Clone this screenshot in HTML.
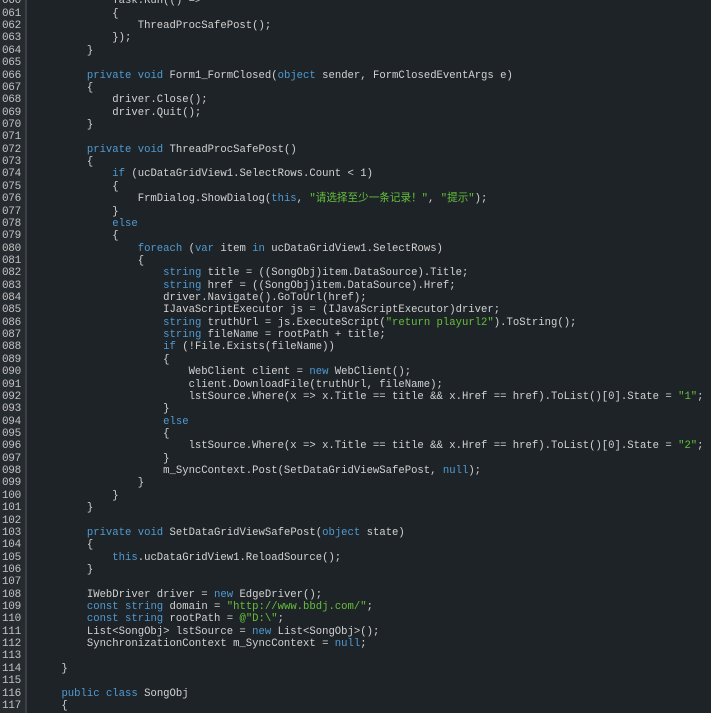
<!DOCTYPE html>
<html><head><meta charset="utf-8"><style>
html,body{margin:0;padding:0;width:711px;height:713px;overflow:hidden;background:#1e2327;}
.g{position:absolute;left:0;top:0;width:25px;height:713px;background:#262b2f;border-right:2px solid #3a4045;}
pre{margin:0;position:absolute;top:-4.6px;font-family:"Liberation Mono","Noto Sans CJK SC",monospace;font-size:10.6px;line-height:12.36px;white-space:pre;}
.n{left:2px;color:#c4c4c4;font-size:11px;letter-spacing:-0.3px;}
.c{left:36px;color:#d2d2d2;}
.k{color:#4f9bd3}.s{color:#64c03c}
</style></head><body>
<div class="g"></div>
<pre class="n">060
061
062
063
064
065
066
067
068
069
070
071
072
073
074
075
076
077
078
079
080
081
082
083
084
085
086
087
088
089
090
091
092
093
094
095
096
097
098
099
100
101
102
103
104
105
106
107
108
109
110
111
112
113
114
115
116
117</pre>
<pre class="c">            Task.Run(() =>
            {
                ThreadProcSafePost();
            });
        }

        <span class="k">private</span> <span class="k">void</span> Form1_FormClosed(<span class="k">object</span> sender, FormClosedEventArgs e)
        {
            driver.Close();
            driver.Quit();
        }

        <span class="k">private</span> <span class="k">void</span> ThreadProcSafePost()
        {
            <span class="k">if</span> (ucDataGridView1.SelectRows.Count &lt; 1)
            {
                FrmDialog.ShowDialog(<span class="k">this</span>, <span class="s">"请选择至少一条记录！"</span>, <span class="s">"提示"</span>);
            }
            <span class="k">else</span>
            {
                <span class="k">foreach</span> (<span class="k">var</span> item <span class="k">in</span> ucDataGridView1.SelectRows)
                {
                    <span class="k">string</span> title = ((SongObj)item.DataSource).Title;
                    <span class="k">string</span> href = ((SongObj)item.DataSource).Href;
                    driver.Navigate().GoToUrl(href);
                    IJavaScriptExecutor js = (IJavaScriptExecutor)driver;
                    <span class="k">string</span> truthUrl = js.ExecuteScript(<span class="s">"return playurl2"</span>).ToString();
                    <span class="k">string</span> fileName = rootPath + title;
                    <span class="k">if</span> (!File.Exists(fileName))
                    {
                        WebClient client = <span class="k">new</span> WebClient();
                        client.DownloadFile(truthUrl, fileName);
                        lstSource.Where(x =&gt; x.Title == title &amp;&amp; x.Href == href).ToList()[0].State = <span class="s">"1"</span>;
                    }
                    <span class="k">else</span>
                    {
                        lstSource.Where(x =&gt; x.Title == title &amp;&amp; x.Href == href).ToList()[0].State = <span class="s">"2"</span>;
                    }
                    m_SyncContext.Post(SetDataGridViewSafePost, <span class="k">null</span>);
                }
            }
        }

        <span class="k">private</span> <span class="k">void</span> SetDataGridViewSafePost(<span class="k">object</span> state)
        {
            <span class="k">this</span>.ucDataGridView1.ReloadSource();
        }

        IWebDriver driver = <span class="k">new</span> EdgeDriver();
        <span class="k">const</span> <span class="k">string</span> domain = <span class="s">"http://www.bbdj.com/"</span>;
        <span class="k">const</span> <span class="k">string</span> rootPath = <span class="s">@"D:\"</span>;
        List&lt;SongObj&gt; lstSource = <span class="k">new</span> List&lt;SongObj&gt;();
        SynchronizationContext m_SyncContext = <span class="k">null</span>;

    }

    <span class="k">public</span> <span class="k">class</span> SongObj
    {</pre>
</body></html>
